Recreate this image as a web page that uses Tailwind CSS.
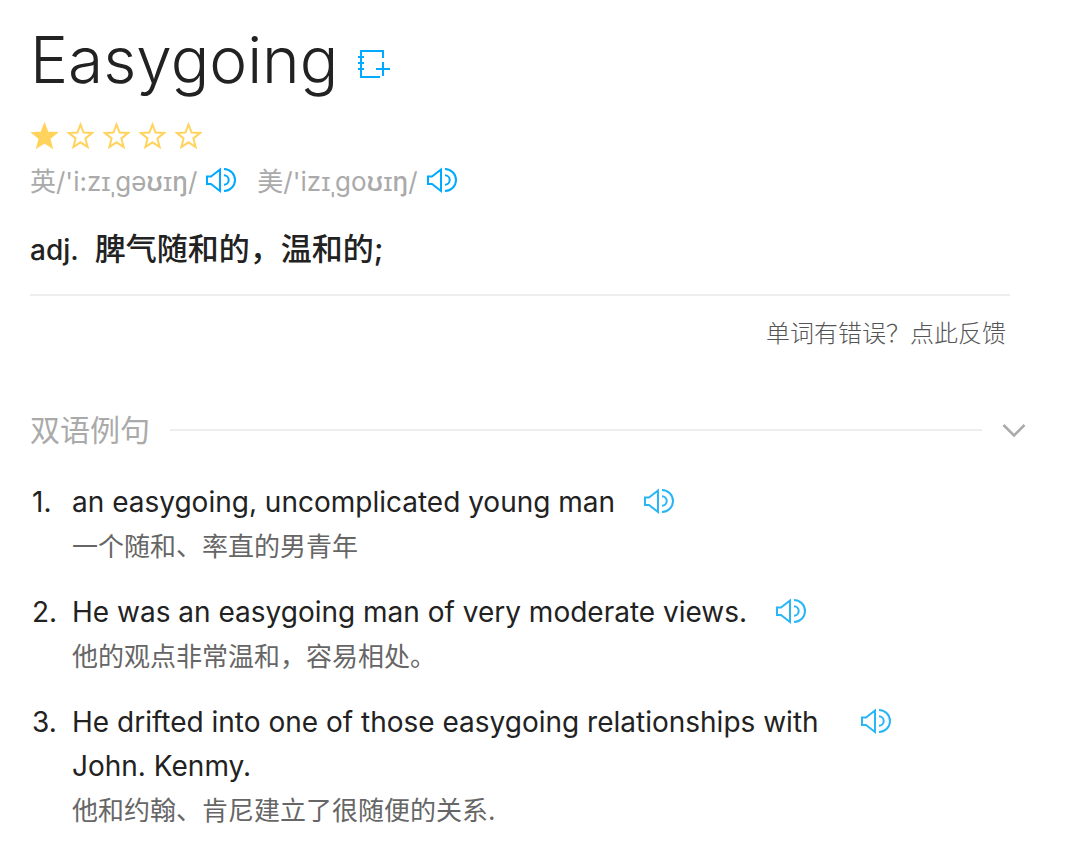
<!DOCTYPE html>
<html lang="zh-CN">
<head>
<meta charset="utf-8">
<meta name="viewport" content="width=device-width, initial-scale=1">
<title>Easygoing</title>
<script src="https://cdn.jsdelivr.net/npm/@tailwindcss/browser@4"></script>
</head>
<body class="bg-white font-['Inter','Noto_Sans_CJK_SC',sans-serif] text-[#222]">
<svg class="hidden" aria-hidden="true">
  <symbol id="speaker" viewBox="0 0 32 28"><path d="M2 10.5v7.5h4l9 7V3.500L6 10.500zM19 3a11 11 0 0 1 0 22M19 9.300a4.700 4.700 0 0 1 0 9.400" fill="none" stroke="currentColor" stroke-width="2"/></symbol>
  <symbol id="star" viewBox="0 0 28 28"><path d="M14.500 2.500L17.600 10.500L26 11L19.400 16.400L21.600 25L14.500 20.300L7.400 25L9.600 16.400L3 11L11.400 10.500z" stroke="currentColor" stroke-width="2"/></symbol>
</svg>
<main class="pl-[30px] pr-[62px] pb-4 pt-[18px]">
  <header class="flex items-center gap-5">
    <h1 class="text-[64px] leading-[84px] font-light">Easygoing</h1>
    <button type="button" aria-label="加入生词本" class="mt-2 text-[#00aaff]"><svg class="block h-7 w-8" viewBox="0 0 32 28" fill="none" stroke="currentColor" stroke-width="2"><path d="M25 8V1H3V27H22M0 7h6M0 13h6M0 19h6M18 19h14M25 12v14"/></svg></button>
  </header>
  <div class="mt-5 flex gap-2 text-[#ffd35c]" role="img" aria-label="1/5">
    <svg class="size-7 fill-current"><use href="#star"/></svg>
    <svg class="size-7 fill-none"><use href="#star"/></svg>
    <svg class="size-7 fill-none"><use href="#star"/></svg>
    <svg class="size-7 fill-none"><use href="#star"/></svg>
    <svg class="size-7 fill-none"><use href="#star"/></svg>
  </div>
  <div class="mt-4 flex items-center text-[26px] leading-8 text-[#aaa]">
    <span>英/'i:z<b class="font-medium">ɪ</b>ˌɡə<b class="font-medium">ʊɪŋ</b>/</span>
    <button type="button" aria-label="英式发音" class="mb-1 ml-2 mr-5 text-[#00aaff]"><svg class="block h-7 w-8"><use href="#speaker"/></svg></button>
    <span>美/'iz<b class="font-medium">ɪ</b>ˌɡo<b class="font-medium">ʊɪŋ</b>/</span>
    <button type="button" aria-label="美式发音" class="mb-1 ml-2 text-[#00aaff]"><svg class="block h-7 w-8"><use href="#speaker"/></svg></button>
  </div>
  <div class="mr-4 mt-[31px] flex items-baseline gap-4 border-b-2 border-[#eee] pb-6 leading-10 font-medium">
    <span class="text-[28px]">adj.</span><span class="text-[31px]">脾气随和的，温和的;</span>
  </div>
  <div class="mr-5 mt-5 text-right text-[24px] leading-9 font-light text-[#555]"><a href="#feedback">单词有错误？点此反馈</a></div>
  <section>
    <div class="mt-[58px] flex items-center gap-5 text-[#aaa]">
      <h2 class="text-[30px] leading-10">双语例句</h2>
      <div class="h-[2px] grow bg-[#eee]"></div>
      <button type="button" aria-label="收起"><svg class="block h-4 w-6" viewBox="0 0 24 16" fill="none" stroke="currentColor" stroke-width="2.500"><path d="M1.500 3L12 13.500L22.500 3"/></svg></button>
    </div>
    <ol class="mt-[30px] grid gap-5 text-[28px] leading-[44px]">
      <li class="flex"><span class="w-[42px] shrink-0 pl-[2px]">1.</span>
        <div><div class="flex items-start gap-7"><p class="max-w-[760px]">an easygoing, uncomplicated young man</p><button type="button" aria-label="朗读例句" class="mt-[7px] text-[#29b6f6]"><svg class="block h-7 w-8"><use href="#speaker"/></svg></button></div>
        <p class="text-[26px] leading-[46px] text-[#666]">一个随和、率直的男青年</p></div></li>
      <li class="flex"><span class="w-[42px] shrink-0 pl-[2px]">2.</span>
        <div><div class="flex items-start gap-7"><p class="max-w-[760px]">He was an easygoing man of very moderate views.</p><button type="button" aria-label="朗读例句" class="mt-[7px] text-[#29b6f6]"><svg class="block h-7 w-8"><use href="#speaker"/></svg></button></div>
        <p class="text-[26px] leading-[46px] text-[#666]">他的观点非常温和，容易相处。</p></div></li>
      <li class="flex"><span class="w-[42px] shrink-0 pl-[2px]">3.</span>
        <div><div class="flex items-start gap-7"><p class="max-w-[760px]">He drifted into one of those easygoing relationships with John. Kenmy.</p><button type="button" aria-label="朗读例句" class="mt-[7px] text-[#29b6f6]"><svg class="block h-7 w-8"><use href="#speaker"/></svg></button></div>
        <p class="text-[26px] leading-[46px] text-[#666]">他和约翰、肯尼建立了很随便的关系.</p></div></li>
    </ol>
  </section>
</main>
</body>
</html>
